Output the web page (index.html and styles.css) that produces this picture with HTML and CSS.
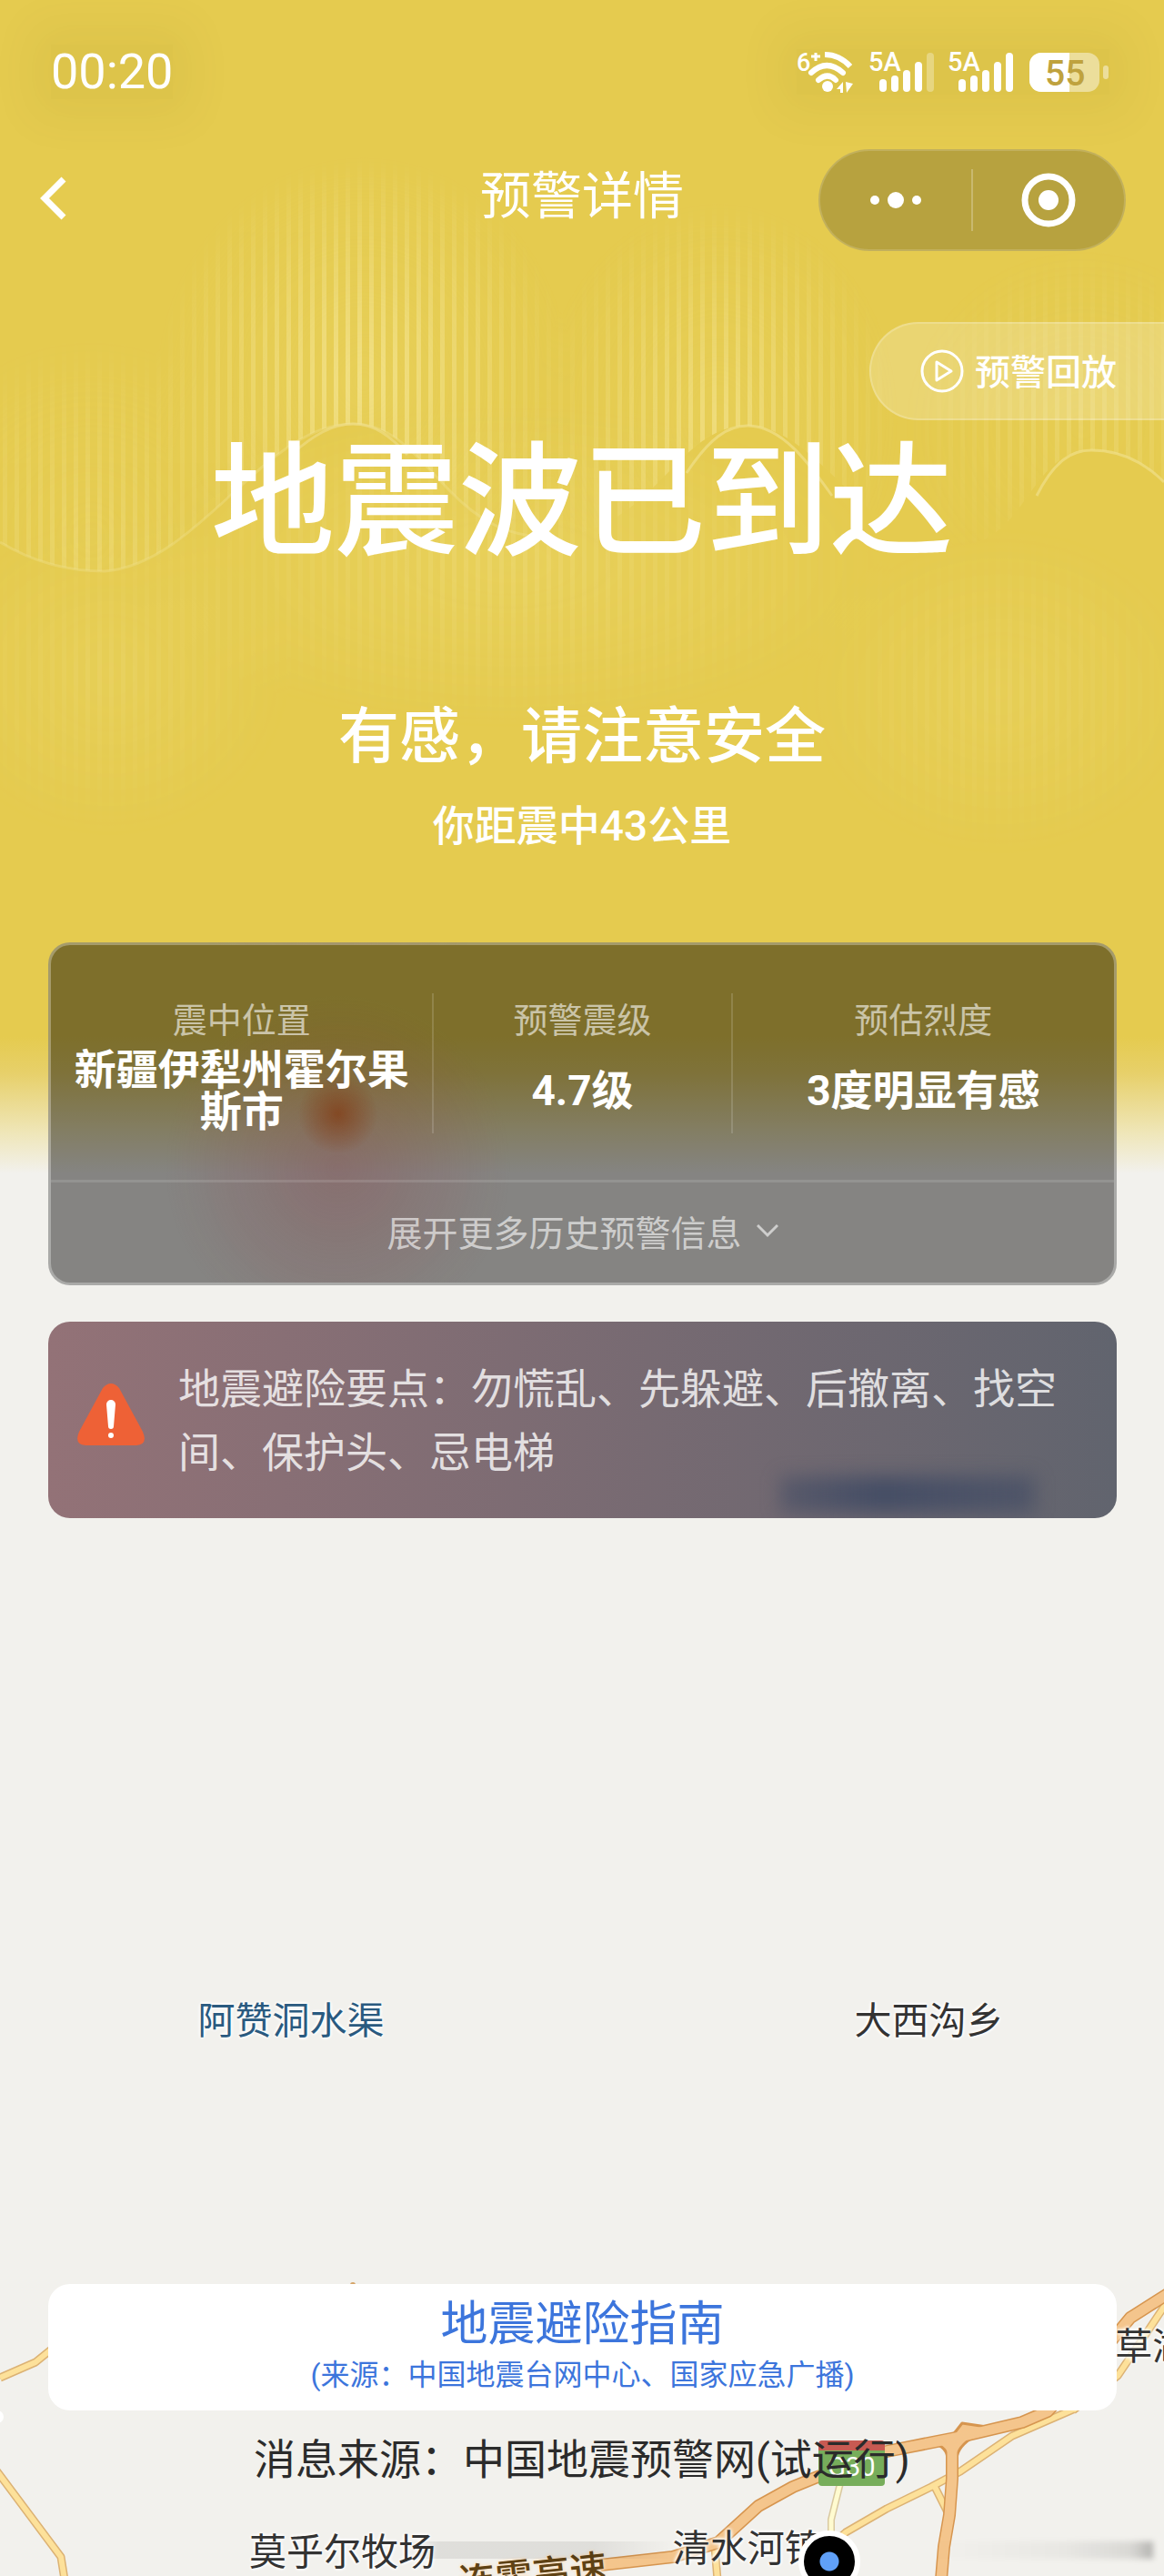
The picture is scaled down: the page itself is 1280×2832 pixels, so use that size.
FILE: index.html
```html
<!DOCTYPE html>
<html lang="zh-CN">
<head>
    <meta charset="utf-8">
    <meta name="viewport" content="width=device-width, initial-scale=1">
    <title>预警详情</title>
    <link rel="stylesheet" href="styles.css">
</head>
<body>
    <div class="page">
        <!-- Map layer -->
        <div class="map">
            <svg class="roads" viewBox="0 2440 1280 392" fill="none" stroke-linejoin="round">
                <circle cx="-3" cy="2657" r="7" fill="#fff"/>
                <circle cx="388" cy="2512" r="3" fill="#d5a366"/>
                <!-- secondary roads -->
                <g stroke="#dcb274" stroke-width="9">
                    <path d="M0 2614L39 2597L60 2580"/>
                    <path d="M-4 2716L67 2811L71 2836"/>
                    <path d="M1182 2648L1113 2678L1056 2717L1024 2734L975 2758L930 2784L912 2800"/>
                    <path d="M1284 2530L1264 2560L1229 2612L1180 2650"/>
                    <path d="M1028 2734L1042 2762"/>
                    <path d="M786 2800L789 2836"/>
                </g>
                <g stroke="#fde19a" stroke-width="6">
                    <path d="M0 2614L39 2597L60 2580"/>
                    <path d="M-4 2716L67 2811L71 2836"/>
                    <path d="M1182 2648L1113 2678L1056 2717L1024 2734L975 2758L930 2784L912 2800"/>
                    <path d="M1284 2530L1264 2560L1229 2612L1180 2650"/>
                    <path d="M1028 2734L1042 2762"/>
                    <path d="M786 2800L789 2836"/>
                </g>
                <path d="M924 2730L914 2770L914 2800" stroke="#d9c9a0" stroke-width="8"/>
                <path d="M924 2730L914 2770L914 2800" stroke="#fffbd0" stroke-width="5"/>
                <!-- highways -->
                <g stroke="#d6954f" stroke-width="14">
                    <path d="M1284 2522L1243 2548L1200 2600L1152 2651L1124 2663L1056 2679L975 2695L899 2723L872 2734L834 2755L790 2795L740 2811L660 2820"/>
                    <path d="M1047 2688L1047 2725L1044 2765L1038 2800L1035 2836"/>
                </g>
                <path d="M1047 2678L1058 2664L1085 2668" stroke="#d6954f" stroke-width="3" fill="#f4c58c"/>
                <path d="M1026 2686Q1042 2690 1042 2704H1052Q1052 2690 1072 2678Z" stroke="#d6954f" stroke-width="3" fill="#f4c58c"/>
                <g stroke="#f4c58c" stroke-width="11">
                    <path d="M1047 2688L1047 2725L1044 2765L1038 2800L1035 2836"/>
                    <path d="M1284 2522L1243 2548L1200 2600L1152 2651L1124 2663L1056 2679L975 2695L899 2723L872 2734L834 2755L790 2795L740 2811L660 2820"/>
                </g>
            </svg>
            <span class="label water">阿赞洞水渠</span>
            <span class="label town-daxigou">大西沟乡</span>
            <span class="label town-caohu">草湖</span>
            <span class="label town-mohur">莫乎尔牧场</span>
            <span class="label town-qingshui">清水河镇</span>
            <span class="label highway">连霍高速</span>
            <span class="road-badge">G30</span>
            <span class="smear smear-left"></span>
            <span class="smear smear-right"></span>
            <span class="my-location"></span>
        </div>

        <!-- Yellow alert backdrop with waves -->
        <div class="backdrop">
            <svg class="waves" viewBox="0 0 1280 1000" preserveAspectRatio="none">
                <defs>
                    <pattern id="bars" width="13" height="1000" patternUnits="userSpaceOnUse">
                        <rect x="3" width="5" height="1000" fill="#f2e189"/>
                    </pattern>
                    <radialGradient id="glow">
                        <stop offset="0" stop-color="#fff"/>
                        <stop offset="1" stop-color="#fff" stop-opacity="0"/>
                    </radialGradient>
                    <clipPath id="above">
                        <path d="M0 0V596C40 620 80 628 115 628C220 620 290 466 388 466C470 466 490 590 600 590C720 590 740 468 822 468C900 468 950 600 1050 600C1130 600 1130 495 1200 495C1235 495 1260 510 1280 530V0Z"/>
                    </clipPath>
                    <mask id="peaks">
                        <ellipse cx="400" cy="420" rx="230" ry="250" fill="url(#glow)"/>
                        <ellipse cx="790" cy="460" rx="200" ry="240" fill="url(#glow)" opacity=".8"/>
                        <ellipse cx="1190" cy="470" rx="200" ry="200" fill="url(#glow)" opacity=".4"/>
                        <ellipse cx="100" cy="590" rx="220" ry="220" fill="url(#glow)" opacity=".45"/>
                    </mask>
                    <mask id="low">
                        <ellipse cx="560" cy="620" rx="420" ry="180" fill="url(#glow)" opacity=".3"/>
                        <ellipse cx="120" cy="740" rx="200" ry="180" fill="url(#glow)" opacity=".2"/>
                        <ellipse cx="1100" cy="760" rx="220" ry="180" fill="url(#glow)" opacity=".2"/>
                    </mask>
                </defs>
                <rect width="1280" height="1000" fill="#efdc74" mask="url(#low)"/>
                <rect width="1280" height="1000" fill="url(#bars)" mask="url(#low)"/>
                <g clip-path="url(#above)">
                    <rect width="1280" height="1000" fill="url(#bars)" mask="url(#peaks)"/>
                    <rect width="1280" height="1000" fill="#efdc74" opacity=".25" mask="url(#peaks)"/>
                </g>
                <g fill="none" stroke="#f2e293" stroke-width="3">
                    <path d="M0 596C40 620 80 628 115 628C220 620 290 466 388 466C470 466 490 590 600 590" opacity=".35"/>
                    <path d="M320 500C345 478 366 466 388 466C412 466 430 480 448 500" opacity=".5"/>
                    <path d="M755 520C780 482 800 468 822 468C860 468 890 510 915 545" opacity=".6"/>
                    <path d="M1140 545C1160 505 1180 495 1200 495C1235 495 1260 510 1280 530" opacity=".6"/>
                </g>
            </svg>
        </div>

        <div class="content">
            <div class="status-bar">
                <span class="time">00:20</span>
                <svg class="status-icons" width="344" height="50" viewBox="0 0 344 50" fill="#fff">
                    <g font-family="Roboto, sans-serif" font-weight="500">
                        <text x="0" y="24" font-size="27">6</text>
                        <text x="79" y="24" font-size="29">5A</text>
                        <text x="166" y="24" font-size="29">5A</text>
                    </g>
                    <path d="M21 4v9M16 8h10" stroke="#fff" stroke-width="3"/>
                    <g fill="none" stroke="#fff" stroke-width="6" stroke-linecap="round">
                        <path d="M31 6Q47 6 59 19" stroke-linecap="butt"/>
                        <path d="M16 26Q33 10 51 26"/>
                        <path d="M24 34Q34 25 43 34"/>
                    </g>
                    <circle cx="34" cy="41" r="6"/>
                    <path d="M44 44l7-8v12h-3v-4zM54 36l8 2-7 10z"/>
                    <rect x="91" y="33" width="8" height="14" rx="4"/>
                    <rect x="104" y="29" width="8" height="18" rx="4"/>
                    <rect x="117" y="23" width="8" height="24" rx="4"/>
                    <rect x="130" y="14" width="8" height="33" rx="4"/>
                    <rect x="143" y="4" width="8" height="43" rx="4" opacity=".3"/>
                    <rect x="178" y="33" width="8" height="14" rx="4"/>
                    <rect x="191" y="29" width="8" height="18" rx="4"/>
                    <rect x="204" y="23" width="8" height="24" rx="4"/>
                    <rect x="217" y="14" width="8" height="33" rx="4"/>
                    <rect x="230" y="4" width="8" height="43" rx="4"/>
                    <rect x="256" y="4" width="77" height="43" rx="13" opacity=".45"/>
                    <path d="M269 4h31v43h-31a13 13 0 0 1-13-13V17a13 13 0 0 1 13-13z"/>
                    <rect x="337" y="18" width="6" height="15" rx="3" opacity=".45"/>
                    <text x="273" y="40" font-size="39" font-weight="500" font-family="Roboto, sans-serif" fill="#bfa23e">55</text>
                </svg>
            </div>

            <div class="navbar">
                <button class="back" aria-label="返回">
                    <svg width="32" height="48" viewBox="0 0 32 48" fill="none" stroke="#fff" stroke-width="7"><path d="M28 3L7 24L28 45"/></svg>
                </button>
                <h1 class="title">预警详情</h1>
                <div class="capsule">
                    <button aria-label="更多">
                        <svg width="60" height="24" viewBox="0 0 60 24" fill="#fff"><circle cx="7" cy="12" r="5"/><circle cx="30" cy="12" r="9"/><circle cx="53" cy="12" r="5"/></svg>
                    </button>
                    <button aria-label="关闭">
                        <svg width="60" height="60" viewBox="0 0 60 60"><circle cx="30" cy="30" r="26" fill="none" stroke="#fff" stroke-width="7"/><circle cx="30" cy="30" r="11" fill="#fff"/></svg>
                    </button>
                </div>
            </div>

            <button class="replay">
                <svg width="48" height="48" viewBox="0 0 48 48" fill="none" stroke="#fff" stroke-width="3"><circle cx="24" cy="24" r="22"/><path d="M18 14V34L34 24Z" stroke-linejoin="round"/></svg>
                <span>预警回放</span>
            </button>

            <div class="headline">地震波已到达</div>
            <div class="advice">有感，请注意安全</div>
            <div class="distance">你距震中43公里</div>

            <div class="info-card">
                <div class="stats">
                    <div class="stat wide">
                        <div class="stat-name">震中位置</div>
                        <div class="stat-value">新疆伊犁州霍尔果斯市</div>
                    </div>
                    <div class="stat">
                        <div class="stat-name">预警震级</div>
                        <div class="stat-value">4.7级</div>
                    </div>
                    <div class="stat wide">
                        <div class="stat-name">预估烈度</div>
                        <div class="stat-value">3度明显有感</div>
                    </div>
                </div>
                <button class="expand">
                    展开更多历史预警信息
                    <svg width="24" height="16" viewBox="0 0 24 16" fill="none" stroke="currentColor" stroke-width="3"><path d="M1 2L12 13L23 2"/></svg>
                </button>
            </div>

            <div class="tips">
                <svg width="76" height="70" viewBox="0 0 76 70">
                    <path d="M29 6Q38 -4 47 6L73 54Q79 68 66 69H10Q-3 68 3 54Z" fill="#ee6136"/>
                    <path d="M33 24a5 5 0 0 1 10 0l-2 24a3 3 0 0 1-6 0z" fill="#fff"/>
                    <circle cx="38" cy="58" r="3" fill="#fff"/>
                </svg>
                <p>地震避险要点：勿慌乱、先躲避、后撤离、找空间、保护头、忌电梯</p>
                <span class="shade"></span>
            </div>

            <a class="guide" href="#">
                <span class="guide-title">地震避险指南</span>
                <span class="guide-source">(来源：中国地震台网中心、国家应急广播)</span>
            </a>
            <div class="source">消息来源：中国地震预警网(试运行)</div>
        </div>
    </div>
</body>
</html>
```
FILE: styles.css
```css
* {
    box-sizing: border-box;
}
body {
    margin: 0;
    font-family: Roboto, "Noto Sans CJK SC", sans-serif;
    background: #f2f1ed;
    color: white;
}
button {
    display: flex;
    align-items: center;
    justify-content: center;
    padding: 0;
    border: none;
    background: none;
    color: inherit;
    font-family: inherit;
}
.page {
    position: relative;
    min-height: 100vh;
    overflow: hidden;
    display: flex;
}

/* Map */
.map {
    position: absolute;
    inset: 0;
}
.roads {
    position: absolute;
    left: 0;
    bottom: 0;
    width: 100%;
}
.label {
    position: absolute;
    font-size: 41px;
    line-height: 48px;
    white-space: nowrap;
    color: #333;
    text-shadow: 0 0 4px white, 0 0 4px white, 0 0 4px white;
}
.water {
    left: 17%;
    bottom: 586px;
    color: #2a5a80;
}
.town-daxigou {
    left: 73.4%;
    bottom: 586px;
}
.town-caohu {
    left: 95.8%;
    bottom: 228px;
}
.town-mohur {
    left: 21.4%;
    bottom: 2px;
}
.town-qingshui {
    left: 57.8%;
    bottom: 6px;
}
.highway {
    left: 39.4%;
    bottom: -24px;
    color: #5f4214;
    font-weight: 500;
    transform: rotate(-6deg);
    text-shadow: 0 0 4px #fbe3c4, 0 0 4px #fbe3c4;
}
.road-badge {
    position: absolute;
    left: 70.3%;
    bottom: 99px;
    width: 73px;
    height: 50px;
    padding-top: 12px;
    border-radius: 4px;
    background: linear-gradient(#c85a52 11px, #77ad5b 11px);
    font-size: 29px;
    line-height: 34px;
    text-align: center;
}
.smear {
    position: absolute;
    bottom: 19px;
    height: 19px;
}
.smear-left {
    left: 35%;
    width: 23%;
    background: linear-gradient(to right, transparent, rgba(0, 0, 0, 0.08) 12%, rgba(0, 0, 0, 0.08) 70%, transparent);
}
.smear-right {
    right: 12px;
    width: 19%;
    background: linear-gradient(to right, transparent, rgba(0, 0, 0, 0.04) 60%, rgba(0, 0, 0, 0.1) 90%, rgba(0, 0, 0, 0.25));
    filter: blur(3px);
}
.my-location {
    position: absolute;
    left: 68.6%;
    bottom: -18px;
    width: 68px;
    height: 68px;
    border: 6px solid white;
    border-radius: 50%;
    background: radial-gradient(#60a0f8 10px, black 11px);
}

/* Alert backdrop */
.backdrop {
    position: absolute;
    top: 0;
    left: 0;
    right: 0;
    height: 1290px;
    background: linear-gradient(#e5cb4f 1140px, #e7d06a 1180px, #efe6b8 1245px, rgba(242, 241, 237, 0));
}
.waves {
    display: block;
    width: 100%;
    height: 1000px;
}

.content {
    position: relative;
    flex: 1;
    display: flex;
    flex-direction: column;
    padding-bottom: 98px;
}

/* Status bar */
.status-bar {
    display: flex;
    align-items: center;
    justify-content: space-between;
    height: 158px;
    padding: 0 60px 0 56px;
}
.time {
    font-size: 54px;
    line-height: 60px;
    background: rgba(100, 80, 0, 0.06);
    box-shadow: 0 0 50px 20px rgba(100, 80, 0, 0.06);
}
.status-icons {
    background: rgba(100, 80, 0, 0.06);
    box-shadow: 0 0 50px 20px rgba(100, 80, 0, 0.06);
}

/* Nav */
.navbar {
    display: grid;
    grid-template-columns: 1fr auto 1fr;
    align-items: center;
    padding: 6px 42px 0 42px;
}
.back {
    justify-self: start;
    padding-bottom: 4px;
}
.title {
    margin: 0;
    padding-bottom: 8px;
    font-size: 56px;
    font-weight: 400;
    line-height: 64px;
}
.capsule {
    justify-self: end;
    display: flex;
    width: 338px;
    height: 112px;
    padding: 20px 0;
    border: 2px solid rgba(255, 255, 255, 0.15);
    border-radius: 56px;
    background: rgba(0, 0, 0, 0.2);
}
.capsule button {
    flex: 1;
}
.capsule button + button {
    border-left: 2px solid rgba(255, 255, 255, 0.25);
}

.replay {
    align-self: flex-end;
    gap: 12px;
    height: 108px;
    margin-top: 78px;
    padding: 0 52px 0 54px;
    border: 2px solid rgba(255, 255, 255, 0.2);
    border-right: none;
    border-radius: 54px 0 0 54px;
    background: rgba(255, 255, 255, 0.2);
    font-size: 39px;
    font-weight: 500;
}
.replay span {
    padding-bottom: 5px;
}

/* Headline */
.headline,
.advice,
.distance {
    text-align: center;
    font-weight: 500;
}
.headline {
    margin-top: 12px;
    font-size: 136px;
    line-height: 160px;
}
.advice {
    margin-top: 136px;
    font-size: 67px;
    line-height: 80px;
}
.distance {
    margin-top: 28px;
    font-size: 46px;
    line-height: 60px;
}

/* Info card */
.info-card {
    margin: 98px 52px 0 53px;
    border: 3px solid rgba(255, 255, 255, 0.3);
    border-radius: 24px;
    background:
        radial-gradient(circle at 27% 50%, rgba(130, 60, 20, 0.75), rgba(130, 60, 20, 0) 44px),
        radial-gradient(circle at 27% 66%, rgba(140, 70, 75, 0.35), rgba(140, 70, 75, 0.15) 110px, rgba(140, 70, 75, 0) 190px),
        rgba(0, 0, 0, 0.45);
}
.stats {
    display: flex;
    padding: 53px 0 51px;
    border-bottom: 3px solid rgba(255, 255, 255, 0.12);
}
.stat {
    flex: 3;
    display: flex;
    flex-direction: column;
    padding: 0 24px;
    text-align: center;
}
.stat.wide {
    flex: 4;
}
.stat + .stat {
    border-left: 2px solid rgba(255, 255, 255, 0.15);
}
.stat-name {
    font-size: 38px;
    line-height: 60px;
    color: rgba(255, 255, 255, 0.6);
}
.stat-value {
    display: flex;
    align-items: center;
    justify-content: center;
    min-height: 94px;
    font-size: 46px;
    font-weight: 700;
    line-height: 46px;
}
.expand {
    width: 100%;
    height: 110px;
    padding-bottom: 4px;
    gap: 16px;
    font-size: 39px;
    color: rgba(255, 255, 255, 0.6);
}

/* Tips */
.tips {
    position: relative;
    overflow: hidden;
    display: flex;
    align-items: center;
    gap: 36px;
    margin: 40px 52px 0 53px;
    padding: 39px 56px 37px 31px;
    border-radius: 24px;
    background: linear-gradient(to right, #937277, #61646e);
}
.tips svg {
    flex: none;
    margin-bottom: 14px;
}
.tips p {
    margin: 0;
    font-size: 46px;
    line-height: 70px;
    color: rgba(255, 255, 255, 0.8);
}
.shade {
    position: absolute;
    right: 90px;
    bottom: 6px;
    width: 280px;
    height: 40px;
    background: linear-gradient(to right, rgba(65, 75, 100, 0.5), rgba(65, 75, 100, 0.9) 40%, rgba(65, 75, 100, 0.6));
    filter: blur(10px);
}

/* Guide link */
.guide {
    display: flex;
    flex-direction: column;
    align-items: center;
    margin: auto 52px 0 53px;
    padding: 10px 0 19px;
    border-radius: 24px;
    background: white;
    color: #3c75dc;
    text-decoration: none;
}
.guide-title {
    font-size: 52px;
    line-height: 70px;
}
.guide-source {
    font-size: 32px;
    line-height: 40px;
}
.source {
    margin-top: 24px;
    font-size: 46px;
    line-height: 60px;
    text-align: center;
    color: #2b2b2b;
}
```
